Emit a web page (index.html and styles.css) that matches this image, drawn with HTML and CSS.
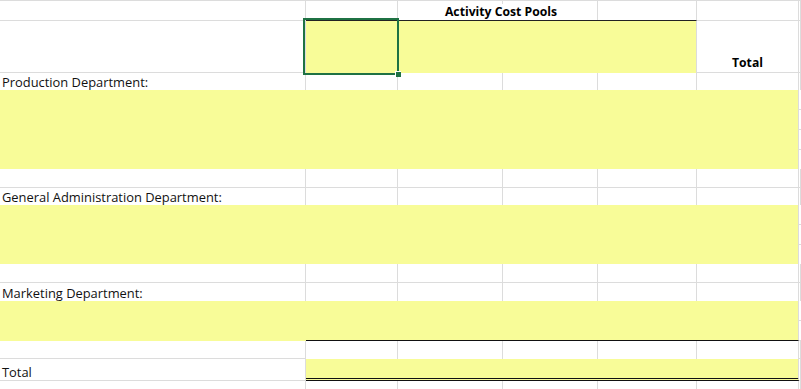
FILE: index.html
```html
<!DOCTYPE html>
<html>
<head>
<meta charset="utf-8">
<link rel="stylesheet" href="styles.css">
</head>
<body>
<div class="sheet">
  <!-- r1 -->
  <div class="c"></div>
  <div class="c title span4"><span>Activity Cost Pools</span></div>
  <div class="c"></div>
  <div class="c"></div>
  <!-- r2 -->
  <div class="c"></div>
  <div class="c sel y"></div>
  <div class="y yr span3"></div>
  <div class="c hd center">Total</div>
  <div class="c"></div>
  <!-- r3 -->
  <div class="c nb lbl">Production Department:</div>
  <div class="c nb"></div><div class="c nb"></div><div class="c nb"></div><div class="c nb"></div><div class="c nb"></div><div class="c nb"></div>
  <!-- r4 -->
  <div class="y yr span6"></div>
  <div class="edge"></div>
  <!-- r5 -->
  <div class="c"></div><div class="c"></div><div class="c"></div><div class="c"></div><div class="c"></div><div class="c"></div><div class="c"></div>
  <!-- r6 -->
  <div class="c nb lbl">General Administration Department:</div>
  <div class="c nb"></div><div class="c nb"></div><div class="c nb"></div><div class="c nb"></div><div class="c nb"></div><div class="c nb"></div>
  <!-- r7 -->
  <div class="y yr span6"></div>
  <div class="edge"></div>
  <!-- r8 -->
  <div class="c"></div><div class="c"></div><div class="c"></div><div class="c"></div><div class="c"></div><div class="c"></div><div class="c"></div>
  <!-- r9 -->
  <div class="c nb lbl">Marketing Department:</div>
  <div class="c nb"></div><div class="c nb"></div><div class="c nb"></div><div class="c nb"></div><div class="c nb"></div><div class="c nb"></div>
  <!-- r10 -->
  <div class="y"></div>
  <div class="y yr span5 under"></div>
  <div class="edge"></div>
  <!-- r11 -->
  <div class="c"></div><div class="c nb"></div><div class="c nb"></div><div class="c nb"></div><div class="c nb"></div><div class="c nb"></div><div class="c"></div>
  <!-- r12 -->
  <div class="c lbl">Total</div>
  <div class="y yr span5 dbl"></div>
  <div class="c"></div>
  <!-- r13 -->
  <div class="c nb"></div><div class="c nb"></div><div class="c nb"></div><div class="c nb"></div><div class="c nb"></div><div class="c nb"></div><div class="c nb"></div>
</div>
</body>
</html>
```
FILE: styles.css
```css
html, body {
  margin: 0;
  padding: 0;
  background: #fff;
  overflow: hidden;
}
body {
  font-family: "Open Sans", Lato, "Liberation Sans", sans-serif;
  font-size: 12.9px;
  color: #111;
}
.sheet {
  width: 801px;
  height: 389px;
  border-top: 1px solid #dcdcdc;
  box-sizing: border-box;
  display: grid;
  grid-template-columns: 306px 92px 105px 95px 99px 102px 1fr;
  grid-template-rows: 20px 52px 17px 79px 19px 17px 59px 19px 18px 40px 18px 22px 1fr;
}
.c {
  box-sizing: border-box;
  border-right: 1px solid #dcdcdc;
  border-bottom: 1px solid #dcdcdc;
  min-width: 0;
}
.c.nb { border-bottom: none; }
.y { background: #f8fc98; box-sizing: border-box; }
.yr { border-right: 1px solid #dcdcdc; }
.span3 { grid-column: span 3; }
.span4 { grid-column: span 4; }
.span5 { grid-column: span 5; }
.span6 { grid-column: span 6; }
.edge {
  background: repeating-linear-gradient(to bottom, transparent 0 19px, #dcdcdc 19px 20px);
}
.lbl {
  display: flex;
  align-items: flex-end;
  padding: 0 0 0 2px;
  line-height: 16px;
  white-space: nowrap;
}
.title {
  display: flex;
  justify-content: center;
  align-items: flex-end;
  border-bottom: 1px solid #222;
  background-image:
    linear-gradient(#dcdcdc, #dcdcdc),
    linear-gradient(#dcdcdc, #dcdcdc),
    linear-gradient(#dcdcdc, #dcdcdc);
  background-size: 1px 100%;
  background-position: 91px 0, 196px 0, 291px 0;
  background-repeat: no-repeat;
  font-weight: bold;
  font-size: 12.2px;
  line-height: 16px;
  color: #000;
}
.title span {
  background: #fff;
  padding: 0 2px;
}
.hd {
  display: flex;
  align-items: flex-end;
  justify-content: center;
  font-weight: bold;
  font-size: 12.2px;
  line-height: 16px;
  padding-bottom: 1px;
  color: #000;
}
.sel {
  position: relative;
  border-right: none;
  border-bottom: none;
}
.sel::before {
  content: "";
  position: absolute;
  left: -3px;
  top: -3px;
  right: -1px;
  bottom: -2px;
  border: 2px solid #1f7244;
}
.sel::after {
  content: "";
  position: absolute;
  right: -3px;
  bottom: -4px;
  width: 5px;
  height: 5px;
  background: #1f7244;
  border-left: 1px solid #fff;
  border-top: 1px solid #fff;
}
.under { border-bottom: 1px solid #111; }
.dbl { border-bottom: 3px double #111; }
```
